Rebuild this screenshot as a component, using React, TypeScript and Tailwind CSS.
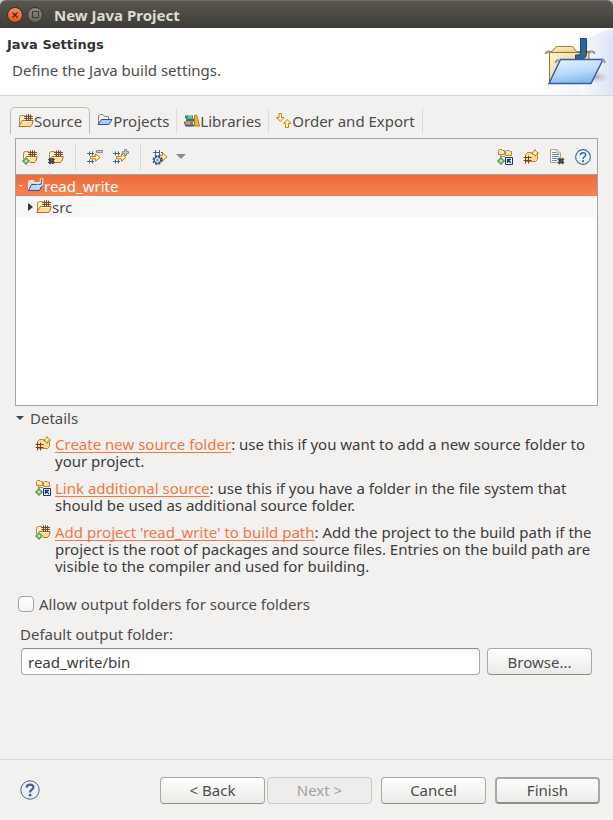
import { useState } from "react";
import type { ReactNode } from "react";

function Icon({ children }: { children: ReactNode }) {
  return (
    <svg viewBox="0 0 16 16" className="size-4 shrink-0" aria-hidden="true">
      {children}
    </svg>
  );
}

function TanFolder() {
  return (
    <>
      <path d="M1.5 12.5V4.500Q1.500 2.500 3.500 2.500H6.500L7.500 4.500H13.500V8" fill="#fdf0c8" stroke="#b98640" />
      <path d="M0.800 13.500L4.200 7.500H15.200Q14.500 12 12.500 13.500Z" fill="#fcdc96" stroke="#a8702a" />
      <path d="M4.800 8.500H13.800" stroke="#fff3d0" />
    </>
  );
}

function PackageGrid() {
  return (
    <>
      <path d="M7 2H14V7H7Z" fill="#f3d6ae" />
      <path d="M6 3.500H15M6 5.500H15M8.500 1.500V8M10.500 1V8M12.500 1.500V8" stroke="#6b4530" strokeWidth="0.9" fill="none" />
    </>
  );
}

function Plus() {
  return <path d="M3 9H5V11H7V13H5V15H3V13H1V11H3Z" fill="#c4e8a4" stroke="#3f8a35" />;
}

function Cross({ x, y }: { x: number; y: number }) {
  return (
    <g transform={`translate(${x} ${y})`}>
      <path d="M0.500 0.500L5.500 5.500M5.500 0.500L0.500 5.500" stroke="#3c3c3c" strokeWidth="2.800" />
      <path d="M1 1L5 5M5 1L1 5" stroke="#777" strokeWidth="0.800" strokeDasharray="1 1" />
    </g>
  );
}

function SourceFolderIcon() {
  return (
    <Icon>
      <TanFolder />
      <PackageGrid />
    </Icon>
  );
}

function AddFolderIcon() {
  return (
    <Icon>
      <TanFolder />
      <PackageGrid />
      <path d="M2 8H6V10H8V16H0V10H2Z" fill="#f6f6f2" />
      <Plus />
    </Icon>
  );
}

function RemoveFolderIcon() {
  return (
    <Icon>
      <TanFolder />
      <PackageGrid />
      <Cross x={0.5} y={9} />
    </Icon>
  );
}

function FilterArrows() {
  return (
    <>
      <path d="M0 4.500H7M0 12.500H7M2.500 2.500V6.500M5.500 2.500V6.500M2.500 10.500V14.500M5.500 10.500V14.500" stroke="#3c6a8a" fill="none" />
      <path d="M3.500 7.500H8.500V4.800L13 8.500L8.500 12.200V9.800H3.500Z" fill="#fff0b5" stroke="#b98218" />
    </>
  );
}

function CollapseFilterIcon() {
  return (
    <Icon>
      <FilterArrows />
      <path d="M9.500 1.500H15.500V3.500H9.500Z" fill="#c4c4c4" stroke="#8c8c8c" />
    </Icon>
  );
}

function ExpandFilterIcon() {
  return (
    <Icon>
      <FilterArrows />
      <path d="M11.500 0.500H13.500V2.500H15.500V4.500H13.500V6.500H11.500V4.500H9.500V2.500H11.500Z" fill="#c4c4c4" stroke="#8c8c8c" />
    </Icon>
  );
}

function ConfigureFilterIcon() {
  return (
    <Icon>
      <path d="M1 3.500H8M3.500 1V6M7.500 1V6M9 3.500H11" stroke="#3c6a8a" fill="none" />
      <path d="M7 6.500H10.500V4L15 8L10.500 12V9.500H7Z" fill="#fff0b5" stroke="#b98218" />
      <circle cx="5.500" cy="11" r="4" fill="#e6edf5" stroke="#2f4f7a" strokeWidth="2" strokeDasharray="2 1.140" />
      <circle cx="5.500" cy="11" r="3.200" fill="#e6edf5" stroke="#2f4f7a" />
      <path d="M4 9.500L7 12.500M7 9.500L4 12.500" stroke="#5674a0" fill="none" />
    </Icon>
  );
}

function LinkSourceIcon() {
  return (
    <Icon>
      <path d="M1.500 5.500V1.500L2.500 0.500H5L6 1.500H7.500V5.500ZM8.500 6.500V2.500L9.500 1.500H12L13 2.500H14.500V6.500Z" fill="#fbe3a8" stroke="#b9853a" />
      <path d="M3.500 6V9M3.500 7.500H8" stroke="#8b8b8b" />
      <Plus />
      <path d="M8.500 8.500H15.500V15.500H8.500Z" fill="#fff" stroke="#1c3568" />
      <path d="M10.500 14V10.500H14M11 11L14 14" stroke="#1c3568" strokeWidth="1.300" fill="none" />
    </Icon>
  );
}

function NewSourceIcon() {
  return (
    <Icon>
      <path d="M2.500 11.500V5.500L4.500 3.500H8L9.500 5.500H14.500V10.500L12.500 12.500H3.500Z" fill="#fbd98f" stroke="#b9853a" />
      <path d="M4 6.500H13" stroke="#fff1c8" />
      <path d="M0.500 8.500H8.500M0.500 11.500H8.500M2.500 6.500V14.500M5.500 6.500V14.500" stroke="#6b4530" fill="none" />
      <path d="M12 0.500L13.300 2.700L15.500 4L13.300 5.300L12 7.500L10.700 5.300L8.500 4L10.700 2.700Z" fill="#fff7a8" stroke="#b08a1c" />
    </Icon>
  );
}

function RemoveEntryIcon() {
  return (
    <Icon>
      <path d="M1.500 0.500H8L11.500 4V13.500H1.500Z" fill="#f1f5fc" stroke="#b6a56c" />
      <path d="M8 0.500V4H11.500" fill="#f6e6b0" stroke="#b6a56c" />
      <path d="M3 3.500H7M3 5.500H10M3 7.500H10M3 9.500H9M3 11.500H8" stroke="#6d8ac0" />
      <Cross x={9} y={9} />
    </Icon>
  );
}

function ProjectsIcon() {
  return (
    <Icon>
      <path d="M1.500 12V3L3 1.500H6L7.500 3.500H11.500V6.500" fill="#fdf3cf" stroke="#7484ac" />
      <path d="M1 11.500L4.500 6.500H15L12 11.500Z" fill="#a9cbf5" stroke="#2f51a8" />
    </Icon>
  );
}

function JavaProjectIcon() {
  return (
    <Icon>
      <path d="M0.500 12V3.500L2 2.500H5.500L7 4.500H11.500V7" fill="#e9d9c4" stroke="#dfe6f4" />
      <path d="M0.500 12.500L3.500 6.500H14.500L11.500 12.500Z" fill="#b7d6f8" stroke="#2f51a8" />
      <path d="M13.500 0.500V5Q13.500 6.500 12 6.500H9.500" stroke="#fff" strokeWidth="3.400" fill="none" />
      <path d="M13.500 1V5Q13.500 6.500 12 6.500H10" stroke="#3e70a5" strokeWidth="1.500" fill="none" />
    </Icon>
  );
}

function LibrariesIcon() {
  return (
    <Icon>
      <path d="M1 2.500H9V5.500H1Z" fill="#21917c" />
      <path d="M2 5.500H10V8.500H2Z" fill="#1d7f82" />
      <path d="M0 8.500H9V11.500H0Z" fill="#c65a2c" />
      <path d="M1 11.500H10V13.500H1Z" fill="#325b8f" />
      <path d="M4 4H8M2 10H6" stroke="#f0dfa0" />
      <path d="M10.500 2.500L12.500 2L15.500 13H10.500Z" fill="#f6b13c" stroke="#c27a15" />
    </Icon>
  );
}

function OrderIcon() {
  return (
    <Icon>
      <path d="M3 0.500H5.500V4.500H8L4.300 8.500L0.500 4.500H3ZM9.500 14.500H12.500V10.500H15L11.200 6.500L7.500 10.500H9.500Z" fill="#fff3bd" stroke="#bd8713" />
    </Icon>
  );
}

function HelpGlyph({ big }: { big?: boolean }) {
  const ink = big ? "#4b6288" : "#2c6ca5";
  return (
    <svg viewBox="0 0 20 20" className={big ? "size-5" : "size-4"} aria-hidden="true">
      <circle cx="10" cy="10" r="9.200" fill={big ? "#edf0f5" : "#f4f8fd"} stroke={ink} strokeWidth={big ? 1 : 1.4} />
      <path d="M6.600 7.600Q6.800 4.600 10 4.600Q13.400 4.600 13.400 7.300Q13.400 8.800 11.600 9.800Q10.100 10.700 10.100 12.400" stroke={ink} strokeWidth={big ? 2.2 : 1.9} fill="none" />
      <circle cx="10.100" cy="15.200" r="1.400" fill={ink} />
    </svg>
  );
}

function Banner() {
  return (
    <svg viewBox="0 0 75 67" className="h-[67px] w-[75px] shrink-0" aria-hidden="true">
      <defs>
        <linearGradient id="sky" x1="0" x2="1">
          <stop offset="0" stopColor="#fff" />
          <stop offset="1" stopColor="#d5dff5" />
        </linearGradient>
        <linearGradient id="front" x1="0.2" y1="0" x2="0.5" y2="1">
          <stop offset="0" stopColor="#e3f1fe" />
          <stop offset="0.6" stopColor="#b4d7fa" />
          <stop offset="1" stopColor="#83b4ee" />
        </linearGradient>
        <linearGradient id="back" x1="0" x2="1" y1="0" y2="1">
          <stop offset="0" stopColor="#fff5d4" />
          <stop offset="1" stopColor="#e9bd62" />
        </linearGradient>
        <radialGradient id="shade">
          <stop offset="0" stopColor="#a99a9e" stopOpacity="0.8" />
          <stop offset="1" stopColor="#c8c2cc" stopOpacity="0" />
        </radialGradient>
      </defs>
      <path d="M75 0Q42 10 28 32Q16 48 0 67H75Z" fill="url(#sky)" opacity="0.6" />
      <path d="M75 4Q50 14 42 36Q38 52 44 67H75Z" fill="url(#sky)" opacity="0.6" />
      <ellipse cx="58" cy="49" rx="14" ry="6" fill="url(#shade)" />
      <path d="M9 25.500Q9 23.500 11 23.500H14L18.500 18.500H34.500L38.500 23.500H50Q53 23.500 52 25.500" fill="url(#back)" stroke="#a6772c" />
      <path d="M11.500 24V55H46L51 35V24.500H12Z" fill="url(#back)" stroke="#8d7444" />
      <path d="M7.500 26Q8 23.500 11 23.500H13M50 23.500H54Q56 23.500 56.500 26" stroke="#999" strokeWidth="2" fill="none" />
      <path d="M42.500 10.500H48.500V25Q48.500 31.500 42 31.500H37.500V27H40Q42.500 27 42.500 24Z" fill="#2c6896" stroke="#174b73" />
      <path d="M11 55.500L22.500 31.500H65L53 55.500Z" fill="url(#front)" stroke="#3457b5" strokeWidth="1.400" />
      <path d="M17.500 35Q18 32 21 32M64 31.500Q66.500 32 67 35" stroke="#999" strokeWidth="2" fill="none" />
    </svg>
  );
}

function Tool({ label, children }: { label: string; children: ReactNode }) {
  return (
    <button type="button" aria-label={label} className="flex size-[26px] items-center justify-center">
      {children}
    </button>
  );
}

function Separator() {
  return <span className="mx-[6px] h-[26px] w-px bg-[#d9d7d5]" />;
}

function Tab({ icon, label }: { icon: ReactNode; label: string }) {
  return (
    <button type="button" role="tab" aria-selected="false" className="flex h-[26px] items-center border-r border-[#deddda] px-[7px]">
      {icon}
      {label}
    </button>
  );
}

function Tip({ icon, link, children }: { icon: ReactNode; link: string; children: ReactNode }) {
  return (
    <li className="flex gap-1">
      {icon}
      <p className="leading-[17px] text-[#3c3c3c]">
        <a href="#" className="inline-block text-[#f07746] underline underline-offset-2 [text-decoration-skip-ink:none]">{link}</a>
        {children}
      </p>
    </li>
  );
}

const button =
  "h-[27px] w-[105px] shrink-0 rounded-[4px] border border-[#aaa8a5] border-b-[#8f8d8a] bg-linear-to-b from-white to-[#ebeae8] text-center";

export default function App() {
  const [folder, setFolder] = useState("read_write/bin");
  const [allow, setAllow] = useState(false);

  return (
    <main className="flex min-h-screen flex-col bg-[#f2f1f0] font-['Noto_Sans',sans-serif] text-[15px] leading-[20px] text-[#4c4c4c]">
      <div className="bg-[#c9c9c9]">
        <header className="flex h-7 items-center gap-1 rounded-t-[6px] border-t border-[#6c6a62] bg-linear-to-b from-[#58564e] to-[#3d3c38] pl-[7px]">
          <button type="button" aria-label="Close" className="flex size-4 items-center justify-center rounded-full border border-[#3a2a22] bg-linear-to-b from-[#f58b66] to-[#e2521d]">
            <svg viewBox="0 0 8 8" className="size-2">
              <path d="M1.500 1.500L6.500 6.500M6.500 1.500L1.500 6.500" stroke="#4c2113" strokeWidth="1.200" />
            </svg>
          </button>
          <button type="button" aria-label="Maximize" className="flex size-4 items-center justify-center rounded-full border border-[#353430] bg-linear-to-b from-[#8c8a82] to-[#66645d]">
            <span className="size-[7px] border border-[#3b3a36]" />
          </button>
          <h1 className="ml-[7px] font-bold text-[#dfdbd2]">New Java Project</h1>
        </header>
      </div>

      <section className="flex h-[68px] justify-between border-b border-[#d8d7d5] bg-white">
        <div className="pt-[7px] pl-[7px]">
          <h2 className="font-['DejaVu_Sans',sans-serif] text-[13px] font-bold text-[#333]">Java Settings</h2>
          <p className="pt-[5px] pl-[5px]">Define the Java build settings.</p>
        </div>
        <Banner />
      </section>

      <div className="px-[15px] pt-[11px]">
        <div role="tablist" className="-ml-[5px] flex items-end">
          <button type="button" role="tab" aria-selected="true" className="flex h-[27px] items-center rounded-t-[5px] border border-b-0 border-[#bdbbb8] bg-[#f4f3f2] px-[7px]">
            <SourceFolderIcon />
            Source
          </button>
          <Tab icon={<ProjectsIcon />} label="Projects" />
          <Tab icon={<LibrariesIcon />} label="Libraries" />
          <Tab icon={<OrderIcon />} label="Order and Export" />
        </div>

        <div className="mt-1 flex h-[268px] flex-col border border-[#a5a4a2] bg-white">
          <div className="flex h-9 items-center justify-between border-b border-[#a5a4a2] bg-[#f2f1f0] px-[1px]">
            <div className="flex items-center">
              <Tool label="Add project to build path"><AddFolderIcon /></Tool>
              <Tool label="Remove from build path"><RemoveFolderIcon /></Tool>
              <Separator />
              <Tool label="Exclude"><CollapseFilterIcon /></Tool>
              <Tool label="Include"><ExpandFilterIcon /></Tool>
              <Separator />
              <Tool label="Configure filters"><ConfigureFilterIcon /></Tool>
              <button type="button" aria-label="More filters" className="flex h-[26px] w-4 items-center justify-center">
                <span className="border-x-[5px] border-t-[5px] border-x-transparent border-t-[#8c8b89]" />
              </button>
            </div>
            <div className="flex items-center">
              <Tool label="Link source"><LinkSourceIcon /></Tool>
              <Tool label="Create new source folder"><NewSourceIcon /></Tool>
              <Tool label="Remove entry"><RemoveEntryIcon /></Tool>
              <Tool label="Help"><HelpGlyph /></Tool>
            </div>
          </div>
          <ul role="tree">
            <li role="treeitem" aria-selected="true" className="flex h-[21px] items-center bg-linear-to-b from-[#ea6c3a] to-[#f78352] pl-[3px] text-white">
              <span className="mr-[5px] border-x-2 border-t-2 border-x-transparent border-t-white" />
              <JavaProjectIcon />
              read_write
            </li>
            <li role="treeitem" aria-selected="false" className="flex h-[21px] items-center bg-[#f7f7f7] pl-3">
              <span className="mr-[3px] border-y-4 border-l-[5px] border-y-transparent border-l-[#333]" />
              <SourceFolderIcon />
              src
            </li>
          </ul>
        </div>

        <button type="button" className="mt-[2px] flex items-center gap-[6px] pl-[1px]">
          <span className="border-x-4 border-t-4 border-x-transparent border-t-[#444]" />
          Details
        </button>
        <ul className="mt-2 flex flex-col gap-[10px] pl-5">
          <Tip icon={<NewSourceIcon />} link="Create new source folder">
            : use this if you want to add a new source folder to your project.
          </Tip>
          <Tip icon={<LinkSourceIcon />} link="Link additional source">
            : use this if you have a folder in the file system that should be used as additional source folder.
          </Tip>
          <Tip icon={<AddFolderIcon />} link="Add project 'read_write' to build path">
            : Add the project to the build path if the project is the root of packages and source files. Entries on the build path are visible to the compiler and used for building.
          </Tip>
        </ul>

        <div className="mt-[19px] flex items-center gap-[5px] pl-[3px]">
          <input
            id="allow"
            type="checkbox"
            checked={allow}
            onChange={(e) => setAllow(e.target.checked)}
            className="size-4 appearance-none rounded-[4px] border border-[#a5a3a0] bg-linear-to-b from-white to-[#f4f4f3] checked:bg-[#f07746]"
          />
          <label htmlFor="allow">Allow output folders for source folders</label>
        </div>
        <label htmlFor="folder" className="mt-[10px] block pl-[5px]">Default output folder:</label>
        <div className="mt-1 flex gap-[7px] px-[6px]">
          <input
            id="folder"
            type="text"
            value={folder}
            onChange={(e) => setFolder(e.target.value)}
            className="h-[27px] min-w-0 flex-1 rounded-[4px] border border-[#aaa8a5] border-t-[#8f8d8a] bg-linear-to-b from-[#f4f4f4] to-white to-30% px-[6px] text-[#3c3c3c]"
          />
          <button type="button" className={button}>Browse...</button>
        </div>
      </div>

      <footer className="mt-auto flex h-[61px] items-center border-t border-[#d8d7d5] pr-[13px] pl-5">
        <button type="button" aria-label="Help"><HelpGlyph big /></button>
        <div className="ml-auto flex gap-[9px]">
          <div className="flex gap-[2px]">
            <button type="button" className={button}>&lt; Back</button>
            <button type="button" disabled className="h-[27px] w-[105px] rounded-[4px] border border-[#c9c8c6] bg-[#eeedec] text-[#a3a2a0]">Next &gt;</button>
          </div>
          <button type="button" className={button}>Cancel</button>
          <button type="button" className="h-[27px] w-[105px] rounded-[4px] border-2 border-[#a9a8a6] border-b-[#8f8d8a] bg-linear-to-b from-white to-[#ebeae8]">Finish</button>
        </div>
      </footer>
    </main>
  );
}
